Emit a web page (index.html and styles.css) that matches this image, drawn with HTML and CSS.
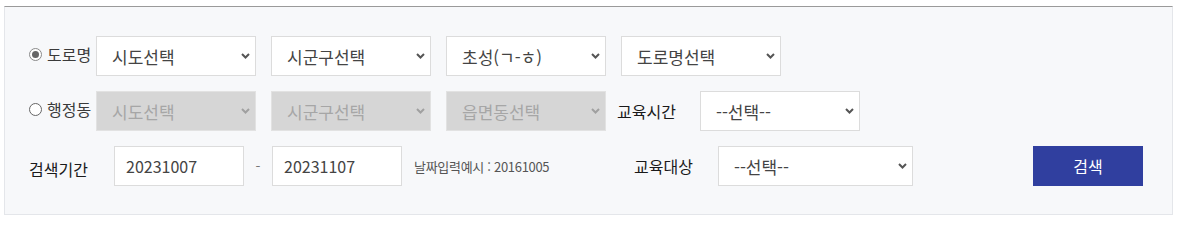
FILE: index.html
```html
<!DOCTYPE html>
<html lang="ko">
<head>
    <meta charset="UTF-8">
    <meta name="viewport" content="width=device-width, initial-scale=1.0">
    <title>교육 검색</title>
    <link rel="stylesheet" href="styles.css">
</head>
<body>
    <div class="search-box">
        <div class="search-row">
            <label class="radio-label">
                <span class="radio checked"></span>
                <span class="radio-text">도로명</span>
            </label>
            <select class="sel">
                <option>시도선택</option>
            </select>
            <select class="sel">
                <option>시군구선택</option>
            </select>
            <select class="sel">
                <option>초성(ㄱ-ㅎ)</option>
            </select>
            <select class="sel">
                <option>도로명선택</option>
            </select>
        </div>

        <div class="search-row">
            <label class="radio-label">
                <span class="radio"></span>
                <span class="radio-text">행정동</span>
            </label>
            <select class="sel" disabled>
                <option>시도선택</option>
            </select>
            <select class="sel" disabled>
                <option>시군구선택</option>
            </select>
            <select class="sel" disabled>
                <option>읍면동선택</option>
            </select>
            <span class="field-label time-label">교육시간</span>
            <select class="sel">
                <option>--선택--</option>
            </select>
        </div>

        <div class="search-row">
            <span class="field-label period-label">검색기간</span>
            <input type="text" class="date-input" value="20231007">
            <span class="dash">-</span>
            <input type="text" class="date-input" value="20231107">
            <span class="hint">날짜입력예시 : 20161005</span>
            <span class="field-label target-label">교육대상</span>
            <select class="sel wide">
                <option>--선택--</option>
            </select>
            <button class="search-btn">검색</button>
        </div>
    </div>
</body>
</html>
```

FILE: styles.css
```css
body {
    margin: 0;
    font-family: "Noto Sans CJK KR", "Noto Sans", sans-serif;
    background-color: #fff;
}
.search-box {
    margin: 6px 4px 0;
    padding: 29px 24px 28px;
    background-color: #f7f8fa;
    border: 1px solid #e4e6ea;
    border-top: 1px solid #9a9a9a;
}
.search-row {
    display: flex;
    align-items: center;
    height: 40px;
    margin-bottom: 15px;
}
.search-row:last-child {
    margin-bottom: 0;
}
.radio-label {
    display: flex;
    align-items: center;
    width: 67px;
    height: 40px;
    padding-bottom: 4px;
    box-sizing: border-box;
}
.radio {
    flex: none;
    width: 13px;
    height: 13px;
    border: 1px solid #666;
    border-radius: 50%;
    box-sizing: border-box;
    background-color: #fff;
    margin-right: 5px;
    display: flex;
    align-items: center;
    justify-content: center;
}
.radio.checked {
    border-color: #8a8a8a;
}
.radio.checked::after {
    content: "";
    width: 7px;
    height: 7px;
    border-radius: 50%;
    background-color: #666;
}
.radio-text {
    font-size: 16px;
    color: #3a3a3a;
    white-space: nowrap;
}
.sel {
    -webkit-appearance: none;
    appearance: none;
    width: 160px;
    height: 40px;
    margin-right: 15px;
    padding: 0 28px 0 15px;
    border: 1px solid #dcdcdc;
    border-radius: 0;
    background-color: #fff;
    background-image: url("data:image/svg+xml;utf8,<svg xmlns='http://www.w3.org/2000/svg' width='9' height='6' viewBox='0 0 9 6'><path d='M1 1 L4.5 4.5 L8 1' fill='none' stroke='%23555' stroke-width='2'/></svg>");
    background-repeat: no-repeat;
    background-position: right 5px center;
    font-family: inherit;
    font-size: 17px;
    color: #444;
    outline: none;
}
.sel:disabled {
    opacity: 1;
    background-color: #d6d6d6;
    color: #a6a6a6;
    border-color: #e2e2e2;
    background-image: url("data:image/svg+xml;utf8,<svg xmlns='http://www.w3.org/2000/svg' width='9' height='6' viewBox='0 0 9 6'><path d='M1 1 L4.5 4.5 L8 1' fill='none' stroke='%23a0a0a0' stroke-width='2'/></svg>");
}
.search-row .sel:last-of-type {
    margin-right: 0;
}
.sel.wide {
    width: 195px;
}
.field-label {
    font-size: 16px;
    color: #1a1a1a;
    box-sizing: border-box;
    white-space: nowrap;
}
.time-label {
    width: 83px;
    margin-left: -4px;
}
.period-label {
    width: 85px;
    padding-top: 6px;
}
.target-label {
    width: 84px;
}
.date-input {
    width: 130px;
    height: 40px;
    padding: 0 11px;
    border: 1px solid #dcdcdc;
    border-radius: 0;
    box-sizing: border-box;
    font-family: inherit;
    font-size: 16px;
    color: #444;
    background-color: #fff;
    outline: none;
}
.dash {
    width: 28px;
    text-align: center;
    font-size: 14px;
    color: #777;
}
.hint {
    width: 232px;
    padding-left: 12px;
    box-sizing: border-box;
    font-size: 13px;
    letter-spacing: -0.3px;
    color: #555;
}
.search-btn {
    margin-left: 120px;
    width: 110px;
    height: 40px;
    border: none;
    border-radius: 0;
    background-color: #303f9f;
    color: #fff;
    font-family: inherit;
    font-size: 16px;
    cursor: pointer;
}
```
